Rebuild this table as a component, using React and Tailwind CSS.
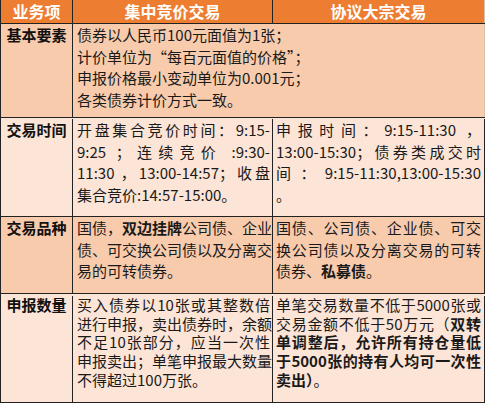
import React from "react";

// one text line; "j" lines are spread to the full cell width like the source
function Line({ j, children }) {
  return (
    <div className={j ? "whitespace-nowrap [text-align-last:justify]" : "whitespace-nowrap"}>
      {children}
    </div>
  );
}

function Label({ children }) {
  return (
    <div className="w-[72px] shrink-0 border-r border-[#222] text-center text-[15px] font-bold text-[#111]">
      {children}
    </div>
  );
}

export default function App() {
  return (
    <div className="w-[486px] h-[404px] bg-white font-['Noto_Sans_CJK_SC',sans-serif] text-[#1a1a1a]">
      <div className="w-[485px] border-l border-[#222]">
        {/* header */}
        <div className="flex h-[24px] bg-[#ed7d31] border-b border-[#222] text-white font-bold text-[16px] leading-[23px]">
          <div className="w-[72px] shrink-0 border-r border-[#222] text-center">业务项</div>
          <div className="w-[200px] shrink-0 border-r border-[#222] text-center">集中竞价交易</div>
          <div className="flex-1 border-r border-[#d8c0b0] text-center">协议大宗交易</div>
        </div>

        {/* 基本要素 */}
        <div className="flex h-[94px] bg-[#f8cbad] border-b border-[#222] leading-[21.7px]">
          <Label>基本要素</Label>
          <div className="flex-1 border-r border-[#d8c0b0] pl-[4px] text-[15px]">
            <Line>债券以人民币100元面值为1张；</Line>
            <Line>计价单位为“每百元面值的价格”；</Line>
            <Line>申报价格最小变动单位为0.001元；</Line>
            <Line>各类债券计价方式一致。</Line>
          </div>
        </div>

        {/* 交易时间 */}
        <div className="flex h-[99px] bg-[#fce4d6] border-b border-[#222] leading-[21.7px] pt-[1px]">
          <Label>交易时间</Label>
          <div className="w-[200px] shrink-0 border-r border-[#222] pl-[4px] pr-[2px] text-[15px]">
            <Line j>开盘集合竞价时间：9:15-</Line>
            <Line j>9:25 ；连续竞价 :9:30-</Line>
            <Line j>11:30 ，13:00-14:57；收盘</Line>
            <Line>集合竞价:14:57-15:00。</Line>
          </div>
          <div className="flex-1 border-r border-[#222] pl-[3px] pr-[3px] text-[15px]">
            <Line j>申报时间：9:15-11:30 ，</Line>
            <Line j>13:00-15:30；债券类成交时</Line>
            <Line j>间：9:15-11:30,13:00-15:30</Line>
            <Line>。</Line>
          </div>
        </div>

        {/* 交易品种 */}
        <div className="flex h-[77px] bg-[#f8cbad] border-b border-[#222] leading-[21.7px]">
          <Label>交易品种</Label>
          <div className="w-[200px] shrink-0 border-r border-[#222] pl-[4px] pr-[2px] text-[15px]">
            <Line j>
              国债，<b>双边挂牌</b>公司债、企业
            </Line>
            <Line j>债、可交换公司债以及分离交</Line>
            <Line>易的可转债券。</Line>
          </div>
          <div className="flex-1 border-r border-[#222] pl-[3px] pr-[3px] text-[15px]">
            <Line j>国债、公司债、企业债、可交</Line>
            <Line j>换公司债以及分离交易的可转</Line>
            <Line>
              债券、<b>私募债</b>。
            </Line>
          </div>
        </div>

        {/* 申报数量 */}
        <div className="flex h-[109px] bg-[#fce4d6] border-b border-[#222] leading-[18.7px] pt-[2px]">
          <Label>申报数量</Label>
          <div className="w-[200px] shrink-0 border-r border-[#222] pl-[4px] pr-[2px] text-[15px]">
            <Line j>买入债券以10张或其整数倍</Line>
            <Line j>进行申报，卖出债券时，余额</Line>
            <Line j>不足10张部分，应当一次性</Line>
            <Line j>申报卖出；单笔申报最大数量</Line>
            <Line>不得超过100万张。</Line>
          </div>
          <div className="flex-1 border-r border-[#222] pl-[3px] pr-[3px] text-[15px]">
            <Line j>单笔交易数量不低于5000张或</Line>
            <Line j>
              交易金额不低于50万元（<b>双转</b>
            </Line>
            <Line j>
              <b>单调整后，允许所有持仓量低</b>
            </Line>
            <Line j>
              <b>于5000张的持有人均可一次性</b>
            </Line>
            <Line>
              <b>卖出）</b>。
            </Line>
          </div>
        </div>
      </div>
    </div>
  );
}
